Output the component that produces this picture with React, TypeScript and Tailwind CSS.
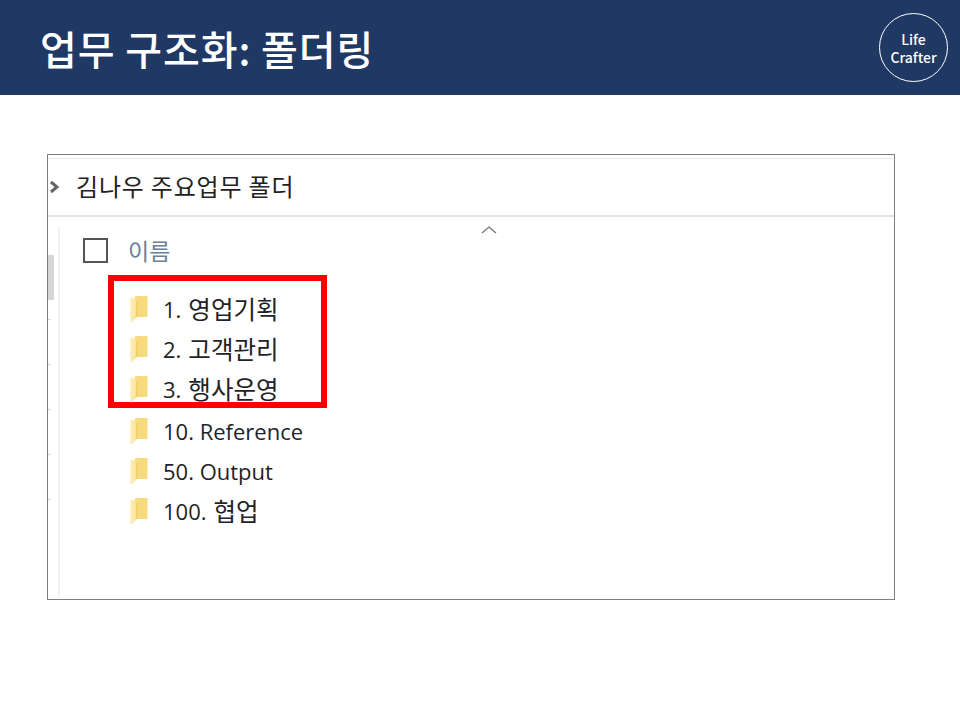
const font = { fontFamily: '"Noto Sans CJK KR", "Open Sans", sans-serif' };
const latin = { fontFamily: '"Open Sans", "Noto Sans CJK KR", sans-serif' };

function Folder() {
  return (
    <svg width="20" height="28" viewBox="0 0 20 28" className="shrink-0 blur-[0.5px]">
      <defs>
        <linearGradient id="f1" x1="0" x2="1" y1="0" y2="0">
          <stop offset="0" stopColor="#fdf2c8" />
          <stop offset="1" stopColor="#f9e08e" />
        </linearGradient>
      </defs>
      <path d="M6 1 H18.5 V22 H7 Z" fill="#f7da7e" />
      <path d="M1 3 H8 V22 L2.5 27.5 L1 27 Z" fill="url(#f1)" />
      <path d="M7 5 L8.5 7 V21 L7 22 Z" fill="#f2cf66" />
    </svg>
  );
}

function Row({ num, ko, en }: { num: string; ko?: string; en?: string }) {
  return (
    <div className="flex items-center h-10">
      <Folder />
      <span className="ml-[14px] leading-none text-[#1f2328] whitespace-nowrap flex items-center">
        <span className="text-[22px]" style={latin}>{num}{en ? ` ${en}` : ""}</span>
        {ko && <span className="ml-[7px] text-[24.5px]">{ko}</span>}
      </span>
    </div>
  );
}

export default function App() {
  return (
    <div className="w-[960px] h-[720px] bg-white overflow-hidden" style={font}>
      <header className="h-[95px] bg-[#1f3864] flex items-center justify-between pl-[40px] pr-[12px]">
        <h1 className="text-[40px] font-medium text-white leading-none tracking-[0.9px]">업무 구조화: 폴더링</h1>
        <div className="w-[69px] h-[69px] rounded-full border border-white flex flex-col items-center justify-center text-white text-[14px] leading-[18px] font-medium">
          <span>Life</span>
          <span>Crafter</span>
        </div>
      </header>

      <main className="pt-[59px] pl-[47px]">
        <section className="w-[848px] h-[446px] border border-[#7f7f7f]">
          <div className="mt-[3px] h-[59px] border-t border-b-2 border-t-[#e8e8e8] border-b-[#e2e2e2] flex items-center">
            <svg width="10" height="14" viewBox="0 0 10 14" className="ml-[1px]">
              <path d="M2 2 L8 7 L2 12" fill="none" stroke="#666" strokeWidth="3" />
            </svg>
            <span className="ml-[17px] -mt-[2px] text-[24px] leading-none text-[#222] tracking-[0.8px]">김나우 주요업무 폴더</span>
          </div>

          <div className="flex h-[381px]">
            <aside className="w-[12px] mt-[9px] border-r-2 border-[#f3f3f3] flex flex-col">
              <div className="mt-[29px] w-[6px] h-[45px] bg-[#d6d6d6]" />
              <div className="mt-[19px] w-[3px] h-px bg-[#dddddd]" />
              <div className="mt-[44px] w-[3px] h-px bg-[#dddddd]" />
              <div className="mt-[44px] w-[3px] h-px bg-[#dddddd]" />
              <div className="mt-[44px] w-[3px] h-px bg-[#dddddd]" />
              <div className="mt-[44px] w-[3px] h-px bg-[#dddddd]" />
            </aside>

            <div className="relative flex-1">
              <svg width="16" height="10" viewBox="0 0 16 10" className="absolute left-[421px] top-[8px]">
                <path d="M1 8 L8 2 L15 8" fill="none" stroke="#777" strokeWidth="1.3" />
              </svg>
              <div className="pl-[23px] pt-[21px] flex items-center">
                <div className="w-[25px] h-[25px] border-2 border-[#555]" />
                <span className="ml-[20px] text-[23px] leading-none text-[#6b7f99]">이름</span>
              </div>

              <div className="mt-[12px] ml-[48px] w-[219px] h-[133px] border-[6px] border-[#ff0000] pl-[15px] pt-[8px] box-border">
                <Row num="1." ko="영업기획" />
                <Row num="2." ko="고객관리" />
                <Row num="3." ko="행사운영" />
              </div>
              <div className="ml-[69px] pt-[3px]">
                <Row num="10." en="Reference" />
                <Row num="50." en="Output" />
                <Row num="100." ko="협업" />
              </div>
            </div>
          </div>
        </section>
      </main>
    </div>
  );
}
